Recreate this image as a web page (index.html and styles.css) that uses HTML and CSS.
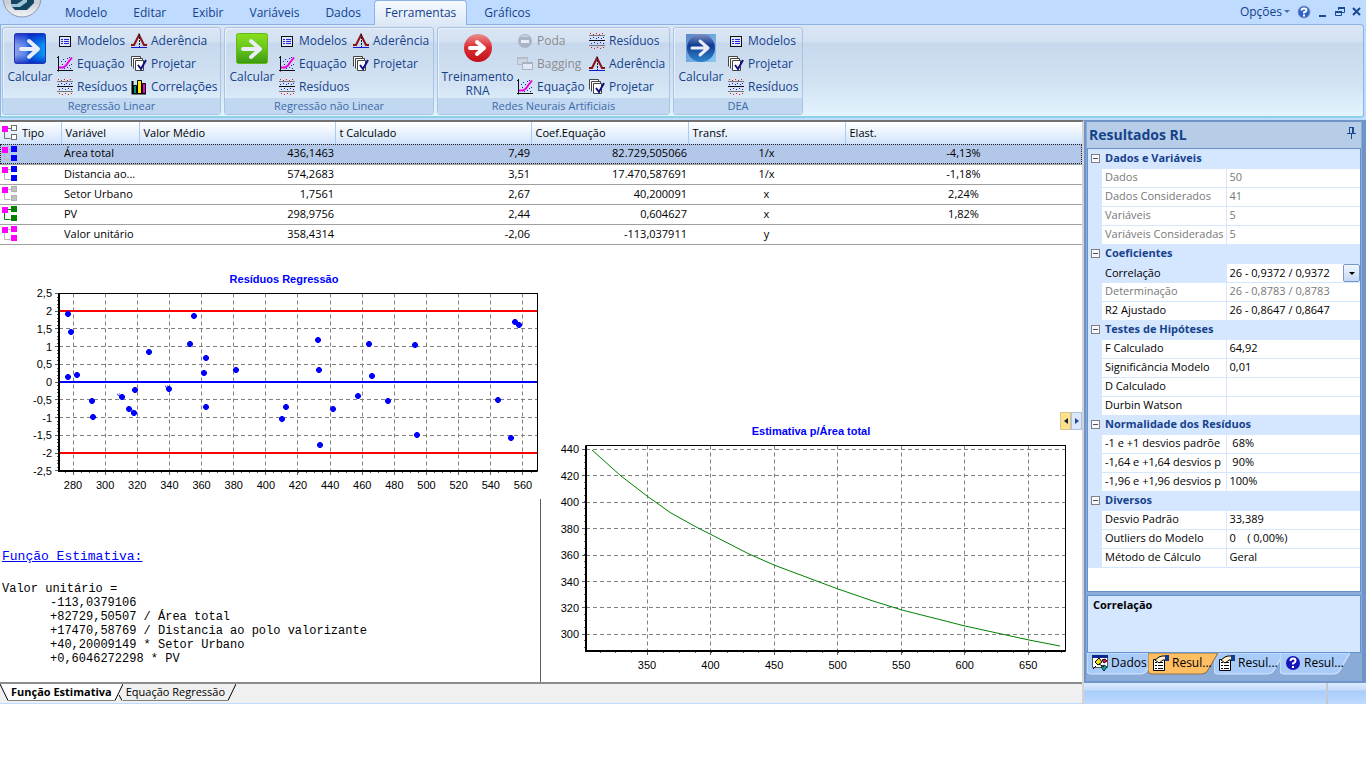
FILE: index.html
```html
<!DOCTYPE html>
<html lang="pt-BR">
<head>
<meta charset="utf-8">
<meta name="viewport" content="width=device-width, initial-scale=1">
<title>Resultados RL</title>
<link rel="stylesheet" href="styles.css">
</head>
<body>
<svg class="defs" aria-hidden="true">
  <defs>
    <linearGradient id="gBlue"><stop offset="0" stop-color="#8ea2e6"/><stop offset=".35" stop-color="#5a86e8"/><stop offset=".5" stop-color="#0a55d8"/><stop offset="1" stop-color="#0b9cf6"/></linearGradient>
    <linearGradient id="gShade" x2="0" y2="1"><stop offset="0" stop-color="#0010c0" stop-opacity=".75"/><stop offset=".4" stop-color="#0040e0" stop-opacity="0"/><stop offset=".7" stop-color="#0040e0" stop-opacity="0"/><stop offset="1" stop-color="#0010b0" stop-opacity=".7"/></linearGradient>
    <linearGradient id="gGreen" x2="0" y2="1"><stop offset="0" stop-color="#8be01e"/><stop offset=".5" stop-color="#66c41c"/><stop offset="1" stop-color="#3c9a12"/></linearGradient>
    <linearGradient id="gRed" x2="0" y2="1"><stop offset="0" stop-color="#e89090"/><stop offset=".45" stop-color="#dc3036"/><stop offset="1" stop-color="#c01018"/></linearGradient>
    <linearGradient id="gNavy" x2="0" y2="1"><stop offset="0" stop-color="#8090c0"/><stop offset=".4" stop-color="#123c94"/><stop offset="1" stop-color="#2f86cc"/></linearGradient>
    <linearGradient id="gSky" x2="1" y2="1"><stop offset="0" stop-color="#5a86c8"/><stop offset="1" stop-color="#8ccaf4"/></linearGradient>
    <linearGradient id="gOrb" x2="0" y2="1"><stop offset="0" stop-color="#ffffff"/><stop offset=".6" stop-color="#c8ccd4"/><stop offset="1" stop-color="#f4f4f6"/></linearGradient>
  </defs>
  <symbol id="arrow" viewBox="0 0 32 32"><path d="M7 16h16M15 8l9 8-9 8" fill="none" stroke="#e9edf7" stroke-width="4" stroke-linecap="round" stroke-linejoin="round"/></symbol>
  <symbol id="big-blue" viewBox="0 0 32 32"><rect x=".5" y=".5" width="31" height="30" rx="2" fill="url(#gBlue)"/><rect x=".5" y=".5" width="31" height="30" rx="2" fill="url(#gShade)" stroke="#2434b8"/><use href="#arrow"/></symbol>
  <symbol id="big-green" viewBox="0 0 32 32"><rect x=".5" y=".5" width="31" height="30" rx="2" fill="url(#gGreen)" stroke="#62b81c"/><use href="#arrow"/></symbol>
  <symbol id="big-red" viewBox="0 0 32 32"><circle cx="16" cy="15" r="14" fill="url(#gRed)"/><path d="M8 15h14M15 9l7 6-7 6" fill="none" stroke="#fff" stroke-width="4" stroke-linecap="round" stroke-linejoin="round"/></symbol>
  <symbol id="big-navy" viewBox="0 0 32 32"><rect x="1" y="1" width="30" height="28" fill="url(#gSky)"/><circle cx="16" cy="15" r="14" fill="url(#gNavy)"/><path d="M7 15h15M15 8l8 7-8 7" fill="none" stroke="#e9edf7" stroke-width="3" stroke-linecap="round" stroke-linejoin="round"/></symbol>
  <symbol id="i-modelos" viewBox="0 0 16 16"><rect x="2.5" y="3.5" width="11" height="10" fill="#dfe6f8" stroke="#101018"/><path d="M4 6.500h2M4 8.500h2M4 10.500h2M7 6.500h5M7 8.500h5M7 10.500h5" stroke="#2222dd"/></symbol>
  <symbol id="i-equacao" viewBox="0 0 16 16"><path d="M1.500 0v15.500M0 14.500h16M0 1.500h2" stroke="#101018" fill="none"/><path d="M2 11.500h4l3-2 2-3 4-5" stroke="#f000e0" stroke-width="2" fill="none"/><path d="M4 5.500h1M6 3.500h1M8 5.500h1M5 8.500h1M10 2.500h1M12 1.500h1M12 9.500h1M14 8.500h1M10 11.500h1M13 12.500h1M7 12.500h1" stroke="#2020c8"/></symbol>
  <symbol id="i-residuos" viewBox="0 0 16 16"><path d="M0 7.500h16" stroke="#101010" /><path d="M0 2.500h16M0 12.500h16" stroke="#777"/><path d="M1 .5h1M4 1.500h1M7 .5h1M10 1.500h1M13 .5h1M2 14.500h1M5 15.500h1M8 14.500h1M11 15.500h1M14 14.500h1" stroke="#f01010"/><path d="M1 5.500h1M4 4.500h1M7 5.500h1M9 4.500h1M12 5.500h1M14 4.500h1M2 10.500h1M5 9.500h1M8 10.500h1M11 9.500h1M14 10.500h1" stroke="#1818e0"/></symbol>
  <symbol id="i-aderencia" viewBox="0 0 16 16"><path d="M0 14.500h16" stroke="#1818d8"/><path d="M0 12h3l2-4 2-4 1-2 1 2 2 4 2 4h3" fill="none" stroke="#8c1010" stroke-width="2"/><path d="M8.500 1v13" stroke="#101048" stroke-dasharray="2 1"/></symbol>
  <symbol id="i-projetar" viewBox="0 0 16 16"><path d="M.5 10.500v-10h9v2M2.500 12.500v-10h9v2M4.500 4.500h8v10h-8z" fill="#fff" stroke="#444"/><path d="M7 9l3 4 5-9" stroke="#101080" stroke-width="2" fill="none"/></symbol>
  <symbol id="i-correl" viewBox="0 0 16 16"><path d="M1.500 2v12.500H15" stroke="#000" fill="none" stroke-width="2"/><path d="M2.500 6.500h3v8h-3z" fill="#009080" stroke="#000"/><path d="M6.500 1.500h4v13h-4z" fill="#ffe800" stroke="#000"/><path d="M11.500 4.500h3v10h-3z" fill="#f000d0" stroke="#000"/></symbol>
  <symbol id="i-poda" viewBox="0 0 16 16"><circle cx="8" cy="8" r="7" fill="#aab4c6"/><path d="M3 4q5-4 10 0z" fill="#c8d0de"/><rect x="4" y="7" width="8" height="3" fill="#e9eef6"/></symbol>
  <symbol id="i-bagging" viewBox="0 0 16 16"><path d="M0 1h11v8H0z" fill="#b4bccb"/><path d="M1 3h9v5H1z" fill="#ced6e4"/><path d="M5 6h11v8H5z" fill="#a8b2c4"/><path d="M6 8h9v5H6z" fill="#e2e9f4"/></symbol>
  <symbol id="i-tree" viewBox="0 0 17 18"><path class="tree-line" d="M8 4.500h3M4.500 6v8.500h6" fill="none"/><rect x="2" y="2" width="6" height="6" fill="#f0f"/><rect class="tree-node" x="11.500" y="1.500" width="5" height="5"/><rect class="tree-node" x="11.500" y="10.500" width="5" height="5"/></symbol>
  <symbol id="i-props" viewBox="0 0 16 16"><path d="M.5 4.500h11v11H.5z" fill="#fff" stroke="#000"/><path d="M2 7.500h2M5 7.500h5M2 10.500h2M5 10.500h5M2 13.500h2M5 13.500h5" stroke="#000"/><path d="M2 5l4-3 3-1h4v4h-3l-4 3z" fill="#fff0c8" stroke="#000"/><path d="M12 0h4v6h-4z" fill="#123a90"/></symbol>
  <symbol id="i-dados" viewBox="0 0 16 16"><path d="M.5 1.500h15v11H.5z" fill="#fff" stroke="#555"/><path d="M0 0h16v3H0z" fill="#10288c"/><path d="M3 7l4-4 3 4-4 3z" fill="#f0e010" stroke="#000"/><path d="M10 5l3-1 2 2-3 2z" fill="#e01060" stroke="#300"/><path d="M9 12l3-2 3 2-3 4z" fill="#10a0a0" stroke="#033"/><path d="M1 14l3-3M7 9l5 3" stroke="#000"/></symbol>
  <symbol id="i-help" viewBox="0 0 16 16"><circle cx="8" cy="8" r="7" fill="#1414b8"/><path d="M5.500 6q0-2.500 2.500-2.500t2.500 2.200q0 1.500-2.500 2.800v1M8 11v2" fill="none" stroke="#fff" stroke-width="2"/></symbol>
</svg>

<div class="app">
  <header class="menubar">
    <button class="orb" aria-label="Menu principal">
      <svg viewBox="0 0 40 40"><circle cx="20" cy="20" r="19" fill="url(#gOrb)" stroke="#8c96a8"/><path d="M9 10h23v15l-7 7H13l-4-4z" fill="#12455f"/><path d="M9 26h6l6-4v-6h4v8l-7 5H9z" fill="#9fc4d8"/></svg>
    </button>
    <nav class="tabs" role="tablist">
      <button role="tab">Modelo</button><button role="tab">Editar</button><button role="tab">Exibir</button><button role="tab">Variáveis</button><button role="tab">Dados</button><button role="tab" class="active" aria-selected="true">Ferramentas</button><button role="tab">Gráficos</button>
    </nav>
    <div class="window-tools">
      <button class="options">Opções<svg viewBox="0 0 6 4" width="6" height="4"><path d="M0 0h6L3 3z" fill="#4a6ea8"/></svg></button>
      <button aria-label="Ajuda"><svg viewBox="0 0 14 14" width="14" height="14"><circle cx="7" cy="7" r="6" fill="#2a62d0" stroke="#8a96a8"/><path d="M4.500 5.500q0-2 2.500-2t2.500 1.800Q9.500 6.500 7 7.500v1M7 9.500v2" fill="none" stroke="#fff" stroke-width="2"/></svg></button>
      <button aria-label="Minimizar"><svg viewBox="0 0 10 12" width="10" height="12"><path d="M1 9h7v2H1z" fill="#1c4a90"/></svg></button>
      <button aria-label="Restaurar"><svg viewBox="0 0 10 12" width="10" height="12"><path d="M3.500 4V1.500h6v5H7M.5 5.500h6v4h-6z" fill="none" stroke="#1c4a90"/><path d="M3 2h7M0 6h7" stroke="#1c4a90" stroke-width="2"/></svg></button>
      <button aria-label="Fechar"><svg viewBox="0 0 10 12" width="10" height="12"><path d="M1 2l7 7M8 2L1 9" stroke="#1c4a90" stroke-width="2"/></svg></button>
    </div>
  </header>

  <section class="ribbon">
    <div class="group g-linear">
      <div class="group-body">
        <button class="big"><svg><use href="#big-blue"/></svg>Calcular</button>
        <div class="smalls">
          <button><svg><use href="#i-modelos"/></svg>Modelos</button><button><svg><use href="#i-equacao"/></svg>Equação</button><button><svg><use href="#i-residuos"/></svg>Resíduos</button>
          <button><svg><use href="#i-aderencia"/></svg>Aderência</button><button><svg><use href="#i-projetar"/></svg>Projetar</button><button><svg><use href="#i-correl"/></svg>Correlações</button>
        </div>
      </div>
      <div class="caption">Regressão Linear</div>
    </div>
    <div class="group g-nonlinear">
      <div class="group-body">
        <button class="big"><svg><use href="#big-green"/></svg>Calcular</button>
        <div class="smalls">
          <button><svg><use href="#i-modelos"/></svg>Modelos</button><button><svg><use href="#i-equacao"/></svg>Equação</button><button><svg><use href="#i-residuos"/></svg>Resíduos</button>
          <button><svg><use href="#i-aderencia"/></svg>Aderência</button><button><svg><use href="#i-projetar"/></svg>Projetar</button>
        </div>
      </div>
      <div class="caption">Regressão não Linear</div>
    </div>
    <div class="group g-neural">
      <div class="group-body">
        <button class="big wide"><svg><use href="#big-red"/></svg>Treinamento<br>RNA</button>
        <div class="smalls">
          <button disabled><svg><use href="#i-poda"/></svg>Poda</button><button disabled><svg><use href="#i-bagging"/></svg>Bagging</button><button><svg><use href="#i-equacao"/></svg>Equação</button>
          <button><svg><use href="#i-residuos"/></svg>Resíduos</button><button><svg><use href="#i-aderencia"/></svg>Aderência</button><button><svg><use href="#i-projetar"/></svg>Projetar</button>
        </div>
      </div>
      <div class="caption">Redes Neurais Artificiais</div>
    </div>
    <div class="group g-dea">
      <div class="group-body">
        <button class="big"><svg><use href="#big-navy"/></svg>Calcular</button>
        <div class="smalls">
          <button><svg><use href="#i-modelos"/></svg>Modelos</button><button><svg><use href="#i-projetar"/></svg>Projetar</button><button><svg><use href="#i-residuos"/></svg>Resíduos</button>
        </div>
      </div>
      <div class="caption">DEA</div>
    </div>
  </section>

  <div class="workspace">
    <main class="document">
      <table class="variables">
        <colgroup><col class="c-type"><col class="c-name"><col class="c-wide"><col class="c-wide"><col class="c-mid"><col class="c-mid"><col></colgroup>
        <thead><tr><th><div class="type-head"><svg class="tree outline"><use href="#i-tree"/></svg>Tipo</div></th><th>Variável</th><th>Valor Médio</th><th>t Calculado</th><th>Coef.Equação</th><th>Transf.</th><th>Elast.</th></tr></thead>
        <tbody>
          <tr class="selected"><td><svg class="tree blue"><use href="#i-tree"/></svg></td><td>Área total</td><td>436,1463</td><td>7,49</td><td>82.729,505066</td><td>1/x</td><td>-4,13%</td></tr>
          <tr><td><svg class="tree blue"><use href="#i-tree"/></svg></td><td>Distancia ao...</td><td>574,2683</td><td>3,51</td><td>17.470,587691</td><td>1/x</td><td>-1,18%</td></tr>
          <tr><td><svg class="tree gray"><use href="#i-tree"/></svg></td><td>Setor Urbano</td><td>1,7561</td><td>2,67</td><td>40,200091</td><td>x</td><td>2,24%</td></tr>
          <tr><td><svg class="tree green"><use href="#i-tree"/></svg></td><td>PV</td><td>298,9756</td><td>2,44</td><td>0,604627</td><td>x</td><td>1,82%</td></tr>
          <tr><td><svg class="tree pink"><use href="#i-tree"/></svg></td><td>Valor unitário</td><td>358,4314</td><td>-2,06</td><td>-113,037911</td><td>y</td><td></td></tr>
        </tbody>
      </table>

      <div class="panes">
        <div class="left-pane">
          <svg class="chart" id="residuals" viewBox="0 245 541 254" role="img" aria-label="Resíduos Regressão"></svg>
          <article class="formula">
            <h2>Função Estimativa:</h2>
            <p>Valor unitário =</p>
            <ul><li>-113,0379106</li><li>+82729,50507 / Área total</li><li>+17470,58769 / Distancia ao polo valorizante</li><li>+40,20009149 * Setor Urbano</li><li>+0,6046272298 * PV</li></ul>
          </article>
        </div>
        <div class="right-pane">
          <div class="pager"><button aria-label="Anterior" class="hot"><svg viewBox="0 0 4 6" width="4" height="6"><path d="M4 0v6L0 3z" fill="#123"/></svg></button><button aria-label="Próximo"><svg viewBox="0 0 4 6" width="4" height="6"><path d="M0 0v6l4-3z" fill="#1c4a90"/></svg></button></div>
          <svg class="chart" id="estimate" viewBox="541 413 541 270" role="img" aria-label="Estimativa p/Área total"></svg>
        </div>
      </div>

      <div class="sheet-tabs">
        <svg class="slash" viewBox="0 0 8 17"><path d="M0 0h8v17z" fill="#fff"/><path d="M0 0l8 16.500" stroke="#000"/></svg><button class="active">Função Estimativa</button><svg class="slash" viewBox="0 0 8 17"><path d="M0 0h8L2 16H0z" fill="#fff"/><path d="M8 0L0 16.500M4 11l3 5.500" stroke="#000" fill="none"/></svg><button>Equação Regressão</button><svg class="slash" viewBox="0 0 8 17"><path d="M8 0L0 16.500" stroke="#000"/></svg>
      </div>
    </main>

    <aside class="dock">
      <div class="panel">
        <header class="panel-head"><h1>Resultados RL</h1><button aria-label="Fixar painel"><svg viewBox="0 0 9 12" width="9" height="12"><path d="M2.500 0v6M6 0v6M2 .5h5M0 6.500h9M4.500 7v5" stroke="#1c4a90" fill="none"/><path d="M5 0h2v6H5z" fill="#1c4a90"/></svg></button></header>
        <div class="grid-box">
          <table class="props">
            <colgroup><col class="p-gutter"><col class="p-name"><col></colgroup>
            <tbody>
              <tr class="cat"><td><button aria-label="Recolher"></button></td><th colspan="2">Dados e Variáveis</th></tr>
              <tr class="dim"><td></td><td>Dados</td><td>50</td></tr>
              <tr class="dim"><td></td><td>Dados Considerados</td><td>41</td></tr>
              <tr class="dim"><td></td><td>Variáveis</td><td>5</td></tr>
              <tr class="dim"><td></td><td>Variáveis Consideradas</td><td>5</td></tr>
              <tr class="cat"><td><button aria-label="Recolher"></button></td><th colspan="2">Coeficientes</th></tr>
              <tr class="current"><td></td><td><label for="corr">Correlação</label></td><td><div class="pick"><select id="corr"><option>26 - 0,9372 / 0,9372</option></select><span class="pick-arrow"></span></div></td></tr>
              <tr class="dim"><td></td><td>Determinação</td><td>26 - 0,8783 / 0,8783</td></tr>
              <tr><td></td><td>R2 Ajustado</td><td>26 - 0,8647 / 0,8647</td></tr>
              <tr class="cat"><td><button aria-label="Recolher"></button></td><th colspan="2">Testes de Hipóteses</th></tr>
              <tr><td></td><td>F Calculado</td><td>64,92</td></tr>
              <tr><td></td><td>Significância Modelo</td><td>0,01</td></tr>
              <tr><td></td><td>D Calculado</td><td></td></tr>
              <tr><td></td><td>Durbin Watson</td><td></td></tr>
              <tr class="cat"><td><button aria-label="Recolher"></button></td><th colspan="2">Normalidade dos Resíduos</th></tr>
              <tr><td></td><td>-1 e +1 desvios padrõe</td><td>&nbsp;68%</td></tr>
              <tr><td></td><td>-1,64 e +1,64 desvios p</td><td>&nbsp;90%</td></tr>
              <tr><td></td><td>-1,96 e +1,96 desvios p</td><td>100%</td></tr>
              <tr class="cat"><td><button aria-label="Recolher"></button></td><th colspan="2">Diversos</th></tr>
              <tr><td></td><td>Desvio Padrão</td><td>33,389</td></tr>
              <tr><td></td><td>Outliers do Modelo</td><td>0&nbsp;&nbsp;&nbsp;&nbsp;( 0,00%)</td></tr>
              <tr><td></td><td>Método de Cálculo</td><td>Geral</td></tr>
            </tbody>
          </table>
        </div>
        <div class="description">Correlação</div>
        <nav class="dock-tabs">
          <button class="t1"><svg class="tab-shape" viewBox="0 0 66 22" preserveAspectRatio="none"><path d="M0 0h66L56 18q-2 3-6 3H4q-4 0-4-4z"/></svg><svg class="ico"><use href="#i-dados"/></svg><span>Dados</span></button>
          <button class="active"><svg class="tab-shape" viewBox="0 0 66 22" preserveAspectRatio="none"><path d="M0 0h66L56 18q-2 3-6 3H4q-4 0-4-4z"/></svg><svg class="ico"><use href="#i-props"/></svg><span>Resul...</span></button>
          <button><svg class="tab-shape" viewBox="0 0 66 22" preserveAspectRatio="none"><path d="M0 0h66L56 18q-2 3-6 3H4q-4 0-4-4z"/></svg><svg class="ico"><use href="#i-props"/></svg><span>Resul...</span></button>
          <button><svg class="tab-shape" viewBox="0 0 66 22" preserveAspectRatio="none"><path d="M0 0h66L56 18q-2 3-6 3H4q-4 0-4-4z"/></svg><svg class="ico"><use href="#i-help"/></svg><span>Resul...</span></button>
        </nav>
      </div>
      <footer class="status"><span></span><span></span></footer>
    </aside>
  </div>
</div>
<script src="charts.js"></script>
</body>
</html>
```
FILE: styles.css
```css
* { box-sizing: border-box; }
body { margin: 0; background: #fff; font: 12px/16px "Open Sans", "Noto Sans", sans-serif; color: #000; }
button { font: inherit; color: inherit; border: 0; padding: 0; background: none; white-space: nowrap; }
h1, h2, p, ul { margin: 0; padding: 0; }
ul { list-style: none; }
.defs { position: absolute; width: 0; height: 0; }
.app { display: flex; flex-direction: column; background: #bfdbff; }

/* Menu bar */
.menubar { display: flex; height: 24px; color: #15428b; }
.orb { position: absolute; top: -22px; left: 2px; width: 40px; height: 40px; }
.orb svg { width: 40px; height: 40px; display: block; }
.tabs { display: flex; padding-left: 52px; }
.tabs button { padding: 0 12px; height: 24px; border: 1px solid transparent; border-bottom: 0; }
.tabs .active { border-color: #8db2e3; border-radius: 4px 4px 0 0; background: linear-gradient(#f6faff, #dce8f6); padding: 0 10px; height: 25px; position: relative; z-index: 1; }
.tabs .active + button { padding-left: 16px; }
.window-tools { display: flex; gap: 7px; margin-left: auto; padding-right: 4px; align-items: center; }
.window-tools svg { display: block; }
.options { display: flex; align-items: center; gap: 2px; }

/* Ribbon */
.ribbon { display: flex; gap: 3px; margin: 0 2px 0 0; padding: 2px 1px 1px; min-height: 94px; border: 1px solid #8db2e3; border-bottom: 2px solid #8fd0e6; border-radius: 0 4px 4px 0; background: linear-gradient(#dbe6f4, #d3e1f2 17px, #c7d8ed 18px, #d3e3f3 60px, #e3f4fe); }
.group { display: flex; flex-direction: column; border: 1px solid #a8c4e4; border-radius: 3px; box-shadow: inset 1px 1px #e8f1fa; color: #15428b; }
.g-linear { min-width: 219px; }
.g-nonlinear { min-width: 210px; }
.g-neural { min-width: 233px; }
.g-dea { min-width: 130px; }
.group-body { display: flex; flex: 1; }
.big { width: 54px; display: flex; flex-direction: column; align-items: center; line-height: 14px; padding-top: 5px; }
.big svg { width: 32px; height: 32px; margin-bottom: 5px; }
.big.wide { width: 79px; }
.smalls { display: grid; grid-template-rows: repeat(3, 23px); grid-auto-flow: column; align-content: start; justify-content: start; column-gap: 2px; padding-top: 1px; }
.smalls button { display: flex; align-items: center; gap: 4px; min-width: 72px; }
.smalls svg { width: 16px; height: 16px; flex: none; }
.smalls button:disabled { color: #8d8d8d; }
.wide + .smalls button { min-width: 70px; }
.caption { height: 16px; font-size: 11px; line-height: 16px; text-align: center; background: #c1d8f0; color: #3e6aaa; border-radius: 0 0 3px 3px; }

/* Workspace */
.workspace { display: flex; margin-top: 2px; min-height: 584px; }
.document { flex: 1; min-width: 0; display: flex; flex-direction: column; background: #fff; border-right: 2px solid #d4d4d4; border-top: 2px solid #707070; font-size: 11px; }
.variables { width: 100%; table-layout: fixed; border-collapse: collapse; line-height: 16px; }
.c-type { width: 61px; } .c-name { width: 78px; } .c-wide { width: 196px; } .c-mid { width: 157px; }
.variables th { height: 22px; padding: 0 4px; text-align: left; font-weight: 400; background: linear-gradient(#fff, #e2eefc 14px, #cfe2fb); border-left: 1px solid #a8cdf4; white-space: nowrap; }
.variables th:first-child { border-left: 0; padding: 0; }
.type-head { display: flex; align-items: center; gap: 5px; }
.variables td { height: 20px; padding: 0 1px 1px; border-bottom: 1px solid #a0a0a0; text-align: right; white-space: nowrap; overflow: hidden; }
.variables td:nth-child(1) { padding: 0; text-align: left; }
.variables td:nth-child(2) { text-align: left; padding-left: 3px; }
.variables td:nth-child(n+6) { text-align: center; }
.selected { background: #b3c7e8; outline: 1px dotted #222; outline-offset: -1px; }
.tree { width: 17px; height: 18px; display: block; }
.tree-line { stroke: var(--line); }
.tree-node { fill: var(--node); stroke: var(--edge); }
.blue { --line: #b8b8b8; --node: #00f; --edge: #00f; }
.gray { --line: #b8b8b8; --node: #c0c0c0; --edge: #b0b0b0; }
.green { --line: #008000; --node: #008000; --edge: #008000; }
.pink { --line: #b8b8b8; --node: #f0f; --edge: #f0f; }
.outline { --line: #707070; --node: #fff; --edge: #707070; }

.panes { flex: 1; display: grid; grid-template-columns: 1fr 1fr; border-bottom: 2px solid #8c8c8c; }
.left-pane { display: flex; flex-direction: column; }
.right-pane { display: flex; flex-direction: column; justify-content: flex-end; position: relative; }
.chart { display: block; width: 100%; }
.chart text { font: 11px "Liberation Sans", Arial, sans-serif; }
.chart .title { font-weight: 700; fill: #00f; text-anchor: middle; }
.xlab { text-anchor: middle; }
.ylab { text-anchor: end; }
.gridline { stroke: #808080; stroke-dasharray: 4 3; }
.tick { stroke: #606060; }
.formula { flex: 1; border-right: 1px solid #606060; padding: 50px 1px 16px 2px; font: 12px/14px "Courier New", "Liberation Mono", monospace; }
.formula h2 { font-size: 13px; font-weight: 400; line-height: 16px; color: #00f; text-decoration: underline; margin-bottom: 17px; }
.formula ul { padding-left: 48px; }
.pager { display: flex; position: absolute; right: 0; bottom: 252px; }
.pager button { width: 11px; height: 18px; display: flex; align-items: center; justify-content: center; border: 1px solid #a8c4e4; background: #dce8fa; }
.pager .hot { border-color: #d8c890; background: #ffe08a; }
.sheet-tabs { display: flex; height: 20px; background: #f0f0f0; border-bottom: 1px solid #bfdbff; }
.slash { width: 8px; height: 17px; flex: none; fill: none; }
.sheet-tabs button { height: 17px; line-height: 14px; padding: 0 3px; border-bottom: 1px solid #808080; }
.sheet-tabs .active { font-weight: 700; background: #fff; }

/* Dock */
.dock { width: 282px; flex: none; display: flex; flex-direction: column; }
.panel { flex: 1; display: flex; flex-direction: column; border: 2px solid #7094c8; border-right-width: 4px; background: #8aabd8; padding: 0 1px 6px; }
.panel-head { display: flex; align-items: center; justify-content: space-between; height: 27px; padding: 0 5px 0 2px; background: #b7cde7; color: #15428b; border-bottom: 1px solid #6593cf; }
.panel-head h1 { font-size: 14px; line-height: 20px; }
.grid-box { flex: 1; background: #fff; border: 1px solid #6593cf; border-top: 0; }
.props { width: 100%; table-layout: fixed; border-collapse: collapse; font-size: 11px; line-height: 16px; }
.p-gutter { width: 14px; } .p-name { width: 124px; }
.props td, .props th { height: 19px; padding: 0 0 1px 3px; border-bottom: 1px solid #d5e6ff; white-space: nowrap; overflow: hidden; text-align: left; }
.props td:nth-child(1) { background: #d5e6ff; padding: 0; text-align: center; }
.props td:nth-child(2) { border-right: 1px solid #d5e6ff; }
.props .current td { padding-bottom: 0; }
.props .current td:nth-child(2) { background: #d5e6ff; }
.cat { background: #d5e6ff; color: #15428b; }
.cat:not(:first-child) > * { border-top: 1px solid #a8ccf6; }
.cat button { display: block; width: 9px; height: 9px; margin: 0 auto; border: 1px solid #808080; background: linear-gradient(#505050, #505050) center / 5px 1px no-repeat #f6f9ff; }
.dim { color: #787878; }
.pick { display: flex; height: 18px; position: relative; }
.pick select { appearance: none; flex: 1; border: 0; padding: 0; margin: 0; background: none; font: inherit; color: inherit; }
.pick-arrow { position: absolute; right: 0; top: 0; width: 17px; height: 18px; border: 1px solid #7a98c4; border-radius: 2px; background: linear-gradient(#f0f6ff, #c4d8f4); pointer-events: none; }
.pick-arrow::after { content: ""; position: absolute; left: 5px; top: 7px; border: 3px solid transparent; border-top-color: #000; border-bottom: 0; }
.description { height: 58px; margin-top: 3px; padding: 1px 5px; border: 1px solid #6593cf; background: #d5e6ff; font-weight: 700; font-size: 11px; }
.dock-tabs { display: flex; height: 22px; }
.dock-tabs button { position: relative; display: flex; align-items: center; gap: 3px; width: 66px; height: 20px; padding-left: 5px; }
.dock-tabs .t1 { width: 61px; }
.dock-tabs .ico { width: 16px; height: 16px; flex: none; position: relative; }
.dock-tabs span { position: relative; }
.tab-shape { position: absolute; inset: 0; width: 70px; height: 22px; fill: #a9cbf8; stroke: #d8e8fc; }
.dock-tabs .active { z-index: 1; }
.active .tab-shape { fill: #ffbe62; stroke: #8f7448; }
.status { display: flex; height: 21px; background: linear-gradient(#dcebff, #c4dcfc 7px, #a8ccfa 8px, #bfdbff); }
.status span:first-child { flex: 1; border-right: 2px solid #c4c8d0; }
.status span:last-child { width: 38px; }
```
FILE: charts.js
```javascript
const NS = "http://www.w3.org/2000/svg";

function add(svg, name, attrs, text) {
  const el = document.createElementNS(NS, name);
  for (const key in attrs) el.setAttribute(key, attrs[key]);
  if (text !== undefined) el.textContent = text;
  svg.appendChild(el);
}

function line(svg, x1, y1, x2, y2, cls) {
  add(svg, "path", { d: `M${x1} ${y1}L${x2} ${y2}`, class: cls });
}

const snap = v => Math.floor(v) + 0.5;

function frame(svg, box, title, titleX, titleY) {
  add(svg, "text", { x: titleX, y: titleY, class: "title" }, title);
  add(svg, "rect", { x: box.l, y: box.t, width: box.r - box.l, height: box.b - box.t, fill: "none", stroke: "#000" });
  add(svg, "path", { d: `M${box.l} ${box.t}V${box.b}H${box.r}`, fill: "none", stroke: "#000", "stroke-width": 2 });
}

function axes(svg, box, xs, ys) {
  xs.forEach(([v, x]) => {
    line(svg, snap(x), box.t, snap(x), box.b, "gridline");
    line(svg, snap(x), box.b, snap(x), box.b + 4, "tick");
    add(svg, "text", { x, y: box.b + 18, class: "xlab" }, v);
  });
  ys.forEach(([v, y]) => {
    line(svg, box.l, snap(y), box.r, snap(y), "gridline");
    line(svg, box.l - 4, snap(y), box.l, snap(y), "tick");
    add(svg, "text", { x: box.l - 7, y: Math.round(y) + 4, class: "ylab" }, v);
  });
}

// Residuals scatter
const res = document.getElementById("residuals");
const rb = { l: 59, t: 293.5, r: 537.5, b: 471 };
const rx = [], ry = [];
for (let v = 280; v <= 560; v += 20) rx.push([v, 73 + (v - 280) * 1.607]);
for (let v = -5; v <= 5; v++) ry.push([String(v / 2).replace(".", ","), 382 - v * 17.75]);
axes(res, rb, rx, ry);
for (let x = 65; x < 537; x += 8.035) line(res, snap(x), rb.b, snap(x), rb.b + 2, "tick");
for (let y = 297; y < 471; y += 3.55) line(res, rb.l - 2, snap(y), rb.l, snap(y), "tick");
[[311, "#f00"], [382, "#00f"], [453, "#f00"]].forEach(([y, c]) =>
  add(res, "path", { d: `M60 ${y}H537`, stroke: c, "stroke-width": 2 }));
frame(res, rb, "Resíduos Regressão", 284, 283);
[[68,314],[71,332],[68,377],[77,375],[92,401],[93,417],[122,397],[129,409],[134,413],[135,390],[149,352],[169,389],[190,344],[194,316],[206,358],[204,373],[206,407],[236,370],[282,419],[286,407],[318,340],[319,370],[320,445],[333,409],[358,396],[369,344],[372,376],[388,401],[415,345],[417,435],[498,400],[511,438],[515,322],[519,325]]
  .forEach(([x, y]) => add(res, "path", { d: `M${x - 1} ${y - 3}h2l2 2v2l-2 2h-2l-2-2v-2z`, fill: "#00f" }));
[[119,395],[132,411],[167,387]].forEach(([x, y]) =>
  add(res, "path", { d: `M${x - 2} ${y - 1}l4 2M${x - 1} ${y + 1}l2-3`, stroke: "#00f", "stroke-dasharray": "1 1" }));

// Estimate curve
const est = document.getElementById("estimate");
const eb = { l: 586, t: 446.5, r: 1065.5, b: 652 };
const ex = [], ey = [];
for (let v = 350; v <= 650; v += 50) ex.push([v, 647 + (v - 350) * 1.271]);
for (let v = 300; v <= 440; v += 20) ey.push([v, 635.4 - (v - 300) * 1.322]);
axes(est, eb, ex, ey);
for (let x = 600; x < 1065; x += 15.9) line(est, snap(x), eb.b, snap(x), eb.b + 2, "tick");
for (let y = 450; y < 652; y += 6.61) line(est, eb.l - 2, snap(y), eb.l, snap(y), "tick");
frame(est, eb, "Estimativa p/Área total", 811, 436);
add(est, "polyline", { points: "592,451 621,477 647,497 671,514 698,529 710,535 749,555 774,566 838,590 873,602 902,611 965,627 1029,641 1060,647", fill: "none", stroke: "#008000" });
```
